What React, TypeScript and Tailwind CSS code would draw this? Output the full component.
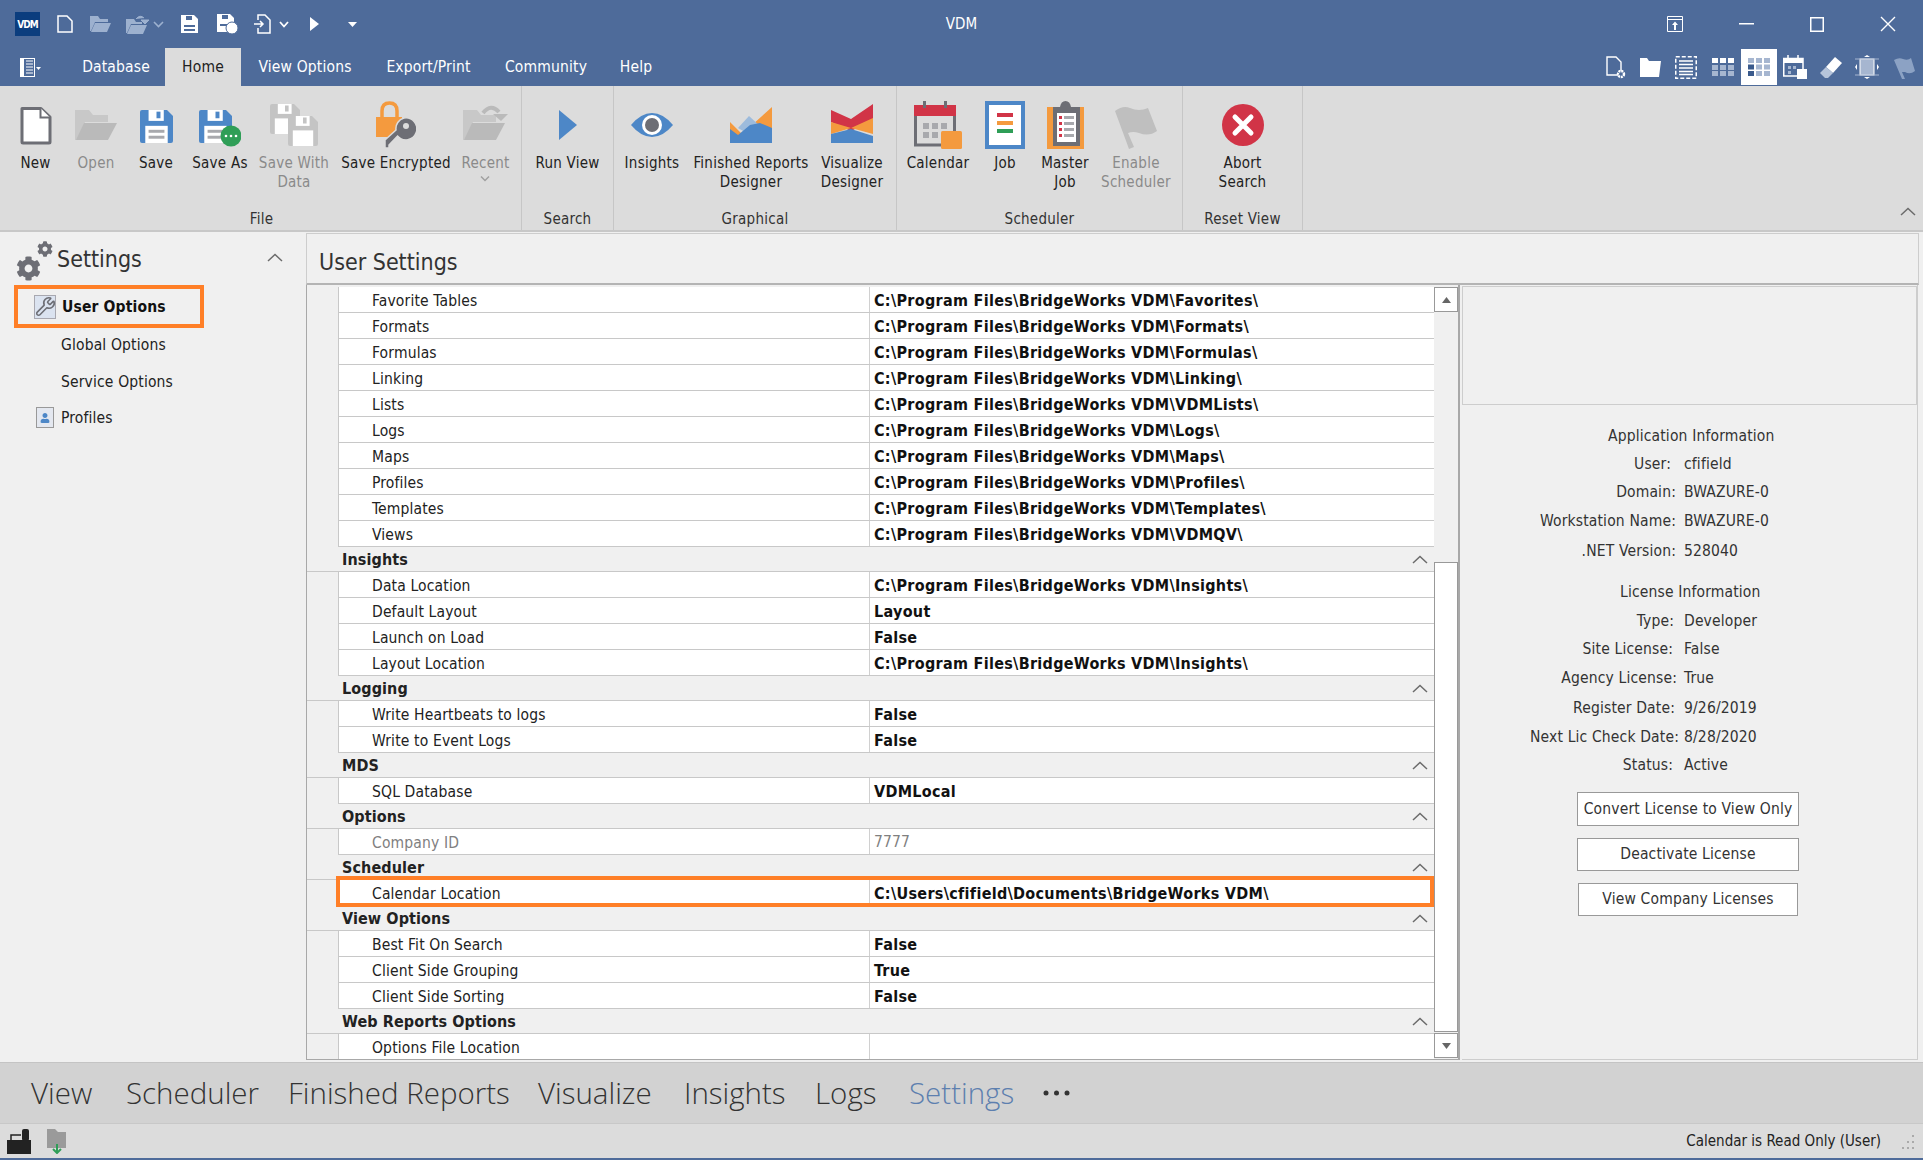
import { FaCog, FaUser } from "react-icons/fa"
import { Wrench } from "lucide-react"

const gridGroups = [
  {
    name: "",
    rows: [
      ["Favorite Tables", "C:\\Program Files\\BridgeWorks VDM\\Favorites\\"],
      ["Formats", "C:\\Program Files\\BridgeWorks VDM\\Formats\\"],
      ["Formulas", "C:\\Program Files\\BridgeWorks VDM\\Formulas\\"],
      ["Linking", "C:\\Program Files\\BridgeWorks VDM\\Linking\\"],
      ["Lists", "C:\\Program Files\\BridgeWorks VDM\\VDMLists\\"],
      ["Logs", "C:\\Program Files\\BridgeWorks VDM\\Logs\\"],
      ["Maps", "C:\\Program Files\\BridgeWorks VDM\\Maps\\"],
      ["Profiles", "C:\\Program Files\\BridgeWorks VDM\\Profiles\\"],
      ["Templates", "C:\\Program Files\\BridgeWorks VDM\\Templates\\"],
      ["Views", "C:\\Program Files\\BridgeWorks VDM\\VDMQV\\"],
    ],
  },
  {
    name: "Insights",
    rows: [
      ["Data Location", "C:\\Program Files\\BridgeWorks VDM\\Insights\\"],
      ["Default Layout", "Layout"],
      ["Launch on Load", "False"],
      ["Layout Location", "C:\\Program Files\\BridgeWorks VDM\\Insights\\"],
    ],
  },
  {
    name: "Logging",
    rows: [
      ["Write Heartbeats to logs", "False"],
      ["Write to Event Logs", "False"],
    ],
  },
  { name: "MDS", rows: [["SQL Database", "VDMLocal"]] },
  { name: "Options", rows: [["Company ID", "7777"]] },
  { name: "Scheduler", rows: [["Calendar Location", "C:\\Users\\cfifield\\Documents\\BridgeWorks VDM\\"]] },
  {
    name: "View Options",
    rows: [
      ["Best Fit On Search", "False"],
      ["Client Side Grouping", "True"],
      ["Client Side Sorting", "False"],
    ],
  },
  { name: "Web Reports Options", rows: [["Options File Location", ""]] },
]

function ChevUp({ className = "" }: { className?: string }) {
  return (
    <svg width="16" height="9" viewBox="0 0 16 9" className={className}>
      <path d="M1 8 L8 1.5 L15 8" fill="none" stroke="#6b6b6b" strokeWidth="1.5" />
    </svg>
  )
}

function Small({ w, h, children, className = "" }: { w: number; h: number; children: React.ReactNode; className?: string }) {
  return (
    <svg width={w} height={h} viewBox={`0 0 ${w} ${h}`} className={className}>
      {children}
    </svg>
  )
}

function FolderOpen({ back, front }: { back: string; front: string }) {
  return (
    <>
      <path d="M0 0 H14 L18 5 H33 V12 H10 L2 30 H0 Z" fill={back} />
      <path d="M9 13 H42 L33 30 H1 Z" fill={front} />
    </>
  )
}

function Floppy({ x, y, w, h, color, line }: { x: number; y: number; w: number; h: number; color: string; line?: string }) {
  return (
    <g transform={`translate(${x} ${y})`}>
      <path d={`M2 0 H${w - 6} L${w} 6 V${h - 2} Q${w} ${h} ${w - 2} ${h} H2 Q0 ${h} 0 ${h - 2} V2 Q0 0 2 0 Z`} fill={color} />
      <rect x={w * 0.26} y="0" width={w * 0.46} height={h * 0.33} fill="#fff" />
      <rect x={w * 0.5} y={h * 0.05} width={w * 0.12} height={h * 0.2} fill={color} />
      <rect x={w * 0.16} y={h * 0.48} width={w * 0.68} height={h * 0.52} fill="#fff" />
      {line && (
        <>
          <rect x={w * 0.26} y={h * 0.6} width={w * 0.48} height={h * 0.09} fill={line} />
          <rect x={w * 0.26} y={h * 0.78} width={w * 0.48} height={h * 0.09} fill={line} />
        </>
      )}
    </g>
  )
}

const ribbonIcons: Record<string, React.ReactNode> = {
  New: (
    <svg width="32" height="48" viewBox="0 0 32 48">
      <path d="M2 7.5 H21 L30 16 V41 Q30 42 29 42 H3 Q2 42 2 41 Z" fill="#fff" stroke="#6d6e75" strokeWidth="3" strokeLinejoin="round" />
      <path d="M20.5 7 V16.5 H30" fill="#fff" stroke="#6d6e75" strokeWidth="2" />
    </svg>
  ),
  Open: (
    <svg width="42" height="48" viewBox="0 0 42 48">
      <g transform="translate(0 9)">
        <FolderOpen back="#c8c8c8" front="#bababa" />
      </g>
    </svg>
  ),
  Save: (
    <svg width="33" height="48" viewBox="0 0 33 48">
      <Floppy x={0} y={9} w={33} h={33} color="#4d87c7" line="#a8a9ad" />
    </svg>
  ),
  "Save As": (
    <svg width="42" height="48" viewBox="0 0 42 48">
      <Floppy x={0} y={9} w={33} h={33} color="#4d87c7" line="#a8a9ad" />
      <circle cx="32" cy="35" r="10.5" fill="#2f9e57" />
      <circle cx="27" cy="35" r="1.3" fill="#fff" />
      <circle cx="32" cy="35" r="1.3" fill="#fff" />
      <circle cx="37" cy="35" r="1.3" fill="#fff" />
    </svg>
  ),
  "Save With Data": (
    <svg width="48" height="48" viewBox="0 0 48 48">
      <Floppy x={0} y={3} w={30} h={30} color="#c4c4c4" />
      <Floppy x={18} y={15} w={30} h={30} color="#c4c4c4" />
    </svg>
  ),
  "Save Encrypted": (
    <svg width="40" height="48" viewBox="0 0 40 48">
      <path d="M6 22 V10 Q6 2 13.5 2 Q21 2 21 10 V22" fill="none" stroke="#f49a3e" strokeWidth="3.5" />
      <rect x="0" y="16" width="26" height="20" fill="#f49a3e" />
      <path d="M28 17 A11 11 0 1 1 21.5 35 L13 44 V47 H9 V39 L20 29 A11 11 0 0 1 28 17 Z" fill="#6d6e75" stroke="#dcdcdc" strokeWidth="1.5" />
      <circle cx="30" cy="25" r="3" fill="#dcdcdc" />
    </svg>
  ),
  Recent: (
    <svg width="46" height="48" viewBox="0 0 46 48">
      <g transform="translate(0 9)">
        <FolderOpen back="#c8c8c8" front="#bababa" />
      </g>
      <path d="M20 12 Q28 2 36 11" fill="none" stroke="#bababa" strokeWidth="4" />
      <path d="M30 13 L45 13 L38 20 Z" fill="#bababa" />
    </svg>
  ),
  "Run View": (
    <svg width="18" height="48" viewBox="0 0 18 48">
      <path d="M0 9 L18 24 L0 39 Z" fill="#4d87c7" />
    </svg>
  ),
  Insights: (
    <svg width="42" height="48" viewBox="0 0 42 48">
      <path d="M0 24 Q10 12 21 12 Q32 12 42 24 Q32 36 21 36 Q10 36 0 24 Z" fill="#4d87c7" />
      <circle cx="21" cy="24" r="10" fill="#fff" />
      <circle cx="21" cy="24" r="7" fill="#6d6e75" />
    </svg>
  ),
  "Finished Reports Designer": (
    <svg width="42" height="48" viewBox="0 0 42 48">
      <path d="M0 21 L12 33 L42 6 V42 H0 Z" fill="#f49a3e" />
      <path d="M8 27 L19 15 L30 25 L20 34 Z" fill="#9dbbdc" />
      <path d="M0 28 L8 34 L20 24 L30 22 L42 27 V42 H0 Z" fill="#4d87c7" />
    </svg>
  ),
  "Visualize Designer": (
    <svg width="42" height="48" viewBox="0 0 42 48">
      <path d="M0 9 L20 18 L42 3 V19 L20 30 L0 21 Z" fill="#d13447" />
      <path d="M0 21 L20 27 L42 17 V33 L20 27 L0 33 Z" fill="#f49a3e" />
      <path d="M0 33 L20 28 L42 35 V42 H0 Z" fill="#4d87c7" />
    </svg>
  ),
  Calendar: (
    <svg width="48" height="48" viewBox="0 0 48 48">
      <rect x="1.5" y="7" width="39" height="37" fill="#dcdcdc" stroke="#6d6e75" strokeWidth="3" />
      <rect x="0" y="4" width="42" height="11" fill="#d13447" />
      <rect x="9" y="0" width="3" height="7" fill="#6d6e75" />
      <rect x="30" y="0" width="3" height="7" fill="#6d6e75" />
      <path d="M9 22 h6 v6 h-6z M18 22 h6 v6 h-6z M27 22 h6 v6 h-6z M9 31 h6 v6 h-6z M18 31 h6 v6 h-6z" fill="#a8a9ad" />
      <rect x="27" y="30" width="21" height="18" rx="1.5" fill="#f49a3e" />
    </svg>
  ),
  Job: (
    <svg width="40" height="48" viewBox="0 0 40 48">
      <rect x="2" y="2" width="36" height="44" fill="#fff" stroke="#4d87c7" strokeWidth="4" />
      <rect x="12" y="12" width="16" height="4" fill="#d13447" />
      <rect x="12" y="20" width="16" height="4" fill="#f49a3e" />
      <rect x="12" y="28" width="16" height="4" fill="#2f9e57" />
    </svg>
  ),
  "Master Job": (
    <svg width="37" height="48" viewBox="0 0 37 48">
      <rect x="0" y="6" width="37" height="42" fill="#f49a3e" />
      <path d="M6 6 H13 Q14 0 18.5 0 Q23 0 24 6 H33 V45 H6 Z" fill="#6d6e75" />
      <rect x="10" y="12" width="19" height="29" fill="#fff" />
      <path d="M12 15 h3 v3 h-3z M12 21 h3 v3 h-3z M12 27 h3 v3 h-3z M12 33 h3 v3 h-3z" fill="#d13447" />
      <path d="M17 15 h10 v3 h-10z M17 21 h10 v3 h-10z M17 27 h10 v3 h-10z M17 33 h10 v3 h-10z" fill="#a8a9ad" />
    </svg>
  ),
  "Enable Scheduler": (
    <svg width="42" height="48" viewBox="0 0 42 48">
      <path d="M0 10 Q8 4 15 7 Q24 11 33 7 L42 30 Q34 36 24 32 Q18 30 13 32 L19 46 L14 48 Z" fill="#bfbfbf" />
    </svg>
  ),
  "Abort Search": (
    <svg width="42" height="48" viewBox="0 0 42 48">
      <ellipse cx="21" cy="24" rx="21" ry="21" fill="#d13447" />
      <path d="M13 16 L29 32 M29 16 L13 32" stroke="#fff" strokeWidth="5" strokeLinecap="round" />
    </svg>
  ),
}

function RibbonButton({ label, width, disabled = false, caret = false, lines }: { label: string; width: string; disabled?: boolean; caret?: boolean; lines?: string[] }) {
  const parts = lines ?? [label]
  return (
    <div className={`${width} shrink-0 flex flex-col items-center ${disabled ? "text-[#8a8a8a]" : "text-[#222]"}`}>
      <div className="h-[48px] flex items-center justify-center">{ribbonIcons[label]}</div>
      <div className="mt-[5px] text-center leading-[19px] whitespace-nowrap">
        {parts.map((p) => (
          <div key={p}>{p}</div>
        ))}
        {caret && (
          <svg width="12" height="8" viewBox="0 0 12 8" className="mx-auto mt-[2px]">
            <path d="M2 1.5 L6 5.5 L10 1.5" fill="none" stroke="#a0a0a0" strokeWidth="1.5" />
          </svg>
        )}
      </div>
    </div>
  )
}

function RibbonGroup({ title, width, children }: { title: string; width: string; children: React.ReactNode }) {
  return (
    <div className={`${width} shrink-0 border-r border-[#c6c6c6] flex flex-col`}>
      <div className="flex flex-1 pt-[15px]">{children}</div>
      <div className="h-[24px] text-center leading-[26px] text-[#333]">{title}</div>
    </div>
  )
}

const infoRows = [
  { l: "User:", v: "cfifield", c: "mt-[8px] pr-[13px]" },
  { l: "Domain:", v: "BWAZURE-0", c: "mt-[8px] pr-[8px]" },
  { l: "Workstation Name:", v: "BWAZURE-0", c: "mt-[9px] pr-[8px]" },
  { l: ".NET Version:", v: "528040", c: "mt-[10px] pr-[8px]" },
]

const licRows = [
  { l: "Type:", v: "Developer", c: "mt-[9px] pr-[10px]" },
  { l: "Site License:", v: "False", c: "mt-[8px] pr-[11px]" },
  { l: "Agency License:", v: "True", c: "mt-[9px] pr-[7px]" },
  { l: "Register Date:", v: "9/26/2019", c: "mt-[10px] pr-[9px]" },
  { l: "Next Lic Check Date:", v: "8/28/2020", c: "mt-[9px] pr-[5px]" },
  { l: "Status:", v: "Active", c: "mt-[8px] pr-[11px]" },
]

function InfoRow({ l, v, c }: { l: string; v: string; c: string }) {
  const [mt, pr] = c.split(" ")
  return (
    <div className={`flex h-[20px] leading-[22px] ${mt}`}>
      <div className={`w-[222px] text-right whitespace-nowrap ${pr}`}>{l}</div>
      <div className="whitespace-nowrap">{v}</div>
    </div>
  )
}

export default function App() {
  return (
    <div className="w-[1923px] h-[1160px] overflow-hidden flex flex-col bg-[#f0f0f0] text-[15.5px] tracking-[0.15px] text-[#222] font-['DejaVu_Sans_Condensed','DejaVu_Sans',sans-serif]">
      {/* title bar */}
      <div className="bg-[#4e6b9a] text-white shrink-0">
        <div className="h-[48px] grid grid-cols-[1fr_auto_1fr] items-center">
          <div className="flex items-center pl-[15px]">
            <div className="w-[25px] h-[24px] bg-[#0b3d7e] text-[10px] font-bold tracking-[-1px] flex items-center justify-center">VDM</div>
            <Small w={16} h={18} className="ml-[17px]">
              <path d="M1 1 H10 L15 6 V17 H1 Z" fill="none" stroke="#fff" strokeWidth="1.5" />
            </Small>
            <Small w={21} h={18} className="ml-[17px]">
              <path d="M0 1 H8 L10 4 H18 V7 H5 L1 16 H0 Z M5 8 H21 L17 17 H1 Z" fill="#9db1cf" />
            </Small>
            <Small w={23} h={20} className="ml-[15px]">
              <path d="M0 5 H8 L10 8 H16 V10 H5 L1 19 H0 Z M5 11 H21 L17 20 H1 Z" fill="#9db1cf" />
              <path d="M10 5 Q14 0 18 4 M15 6 H23 L19 10 Z" fill="#9db1cf" stroke="#9db1cf" />
            </Small>
            <Small w={11} h={7} className="ml-[4px]">
              <path d="M1 1 L5.5 5.5 L10 1" fill="none" stroke="#9db1cf" strokeWidth="1.6" />
            </Small>
            <Small w={17} h={18} className="ml-[17px]">
              <path d="M0 0 H13 L17 4 V18 H0 Z" fill="#fff" />
              <path d="M5 1 H11 V5 H5 Z M3 10 H14 V12 H3 Z M3 14 H14 V16 H3 Z" fill="#4e6b9a" />
            </Small>
            <Small w={21} h={20} className="ml-[19px]">
              <path d="M0 0 H13 L17 4 V18 H0 Z" fill="#fff" />
              <path d="M5 1 H11 V5 H5 Z M3 10 H14 V12 H3 Z" fill="#4e6b9a" />
              <circle cx="15" cy="14" r="6" fill="#fff" stroke="#4e6b9a" />
            </Small>
            <Small w={17} h={20} className="ml-[16px]">
              <path d="M4 6 V1 H11 L16 6 V19 H4 V14" fill="none" stroke="#fff" strokeWidth="1.5" />
              <path d="M0 10 H9 M6 7 L9 10 L6 13" fill="none" stroke="#fff" strokeWidth="1.5" />
            </Small>
            <Small w={10} h={7} className="ml-[8px]">
              <path d="M1 1 L5 5.5 L9 1" fill="none" stroke="#fff" strokeWidth="1.8" />
            </Small>
            <Small w={9} h={14} className="ml-[21px]">
              <path d="M0 0 L9 7 L0 14 Z" fill="#fff" />
            </Small>
            <Small w={9} h={5} className="ml-[29px]">
              <path d="M0 0 H9 L4.5 5 Z" fill="#fff" />
            </Small>
          </div>
          <div className="text-[15px] tracking-normal">VDM</div>
          <div className="flex items-center justify-end pr-[27px]">
            <Small w={16} h={16}>
              <path d="M.5 .5 H15.5 V15.5 H.5 Z M.5 3.5 H15.5" fill="none" stroke="#fff" />
              <path d="M8 5.5 L11 9 H9 V14 H7 V9 H5 Z" fill="#fff" />
            </Small>
            <Small w={15} h={2} className="ml-[56px]">
              <rect width="15" height="1.5" fill="#fff" />
            </Small>
            <Small w={14} h={15} className="ml-[56px]">
              <rect x=".75" y=".75" width="12.5" height="13.5" fill="none" stroke="#fff" strokeWidth="1.5" />
            </Small>
            <Small w={16} h={16} className="ml-[56px]">
              <path d="M1 1 L15 15 M15 1 L1 15" stroke="#fff" strokeWidth="1.4" />
            </Small>
          </div>
        </div>
        <div className="h-[38px] flex items-end">
          <div className="w-[67px] h-full shrink-0 flex items-center pl-[20px]">
            <Small w={15} h={19}>
              <rect x=".5" y=".5" width="14" height="18" fill="#4e6b9a" stroke="#fff" />
              <rect x="0" y="0" width="4" height="19" fill="#fff" />
              <path d="M6 3 H13 M6 6 H13 M6 9 H13 M6 12 H13 M6 15 H13" stroke="#fff" />
            </Small>
            <Small w={5} h={3} className="ml-[1px] mt-[3px]">
              <path d="M0 0 H5 L2.5 3 Z" fill="#fff" />
            </Small>
          </div>
          {[
            ["Database", "w-[98px]"],
            ["Home", "w-[76px]"],
            ["View Options", "w-[128px]"],
            ["Export/Print", "w-[119px]"],
            ["Community", "w-[116px]"],
            ["Help", "w-[64px]"],
          ].map(([t, w]) => (
            <div key={t} className={`${w} h-full flex items-center justify-center pt-[1px] ${t === "Home" ? "bg-[#dcdcdc] text-[#222]" : "text-white"}`}>
              {t}
            </div>
          ))}
          <div className="flex-1 h-full flex items-center justify-end pr-[8px]">
            <Small w={20} h={23}>
              <path d="M1 1 H10 L15 6 V19 H1 Z" fill="none" stroke="#fff" strokeWidth="1.4" />
              <circle cx="15" cy="18" r="3" fill="#4e6b9a" stroke="#fff" strokeWidth="2.4" strokeDasharray="2 .8" />
            </Small>
            <Small w={21} h={21} className="ml-[14px]">
              <path d="M0 1 H7 L9 4 H21 L19 20 H0 Z" fill="#fff" />
            </Small>
            <Small w={22} h={23} className="ml-[14px]">
              <rect x=".75" y=".75" width="20.5" height="21.5" fill="none" stroke="#fff" strokeWidth="1.5" strokeDasharray="4 2" />
              <path d="M4 5 H18 M4 8.5 H18 M4 12 H18 M4 15.5 H18 M4 18.5 H18" stroke="#fff" strokeWidth="1.5" />
            </Small>
            <Small w={22} h={18} className="ml-[15px]">
              <path d="M0 0 h6 v5 h-6z M8 0 h6 v5 h-6z M16 0 h6 v5 h-6z" fill="#fff" />
              <path d="M0 7 h6 v5 h-6z M8 7 h6 v5 h-6z M16 7 h6 v5 h-6z M0 13 h6 v5 h-6z M8 13 h6 v5 h-6z M16 13 h6 v5 h-6z" fill="#a6b6d0" />
            </Small>
            <div className="ml-[7px] w-[36px] h-[36px] bg-white flex items-center justify-center">
              <Small w={22} h={18}>
                <path d="M0 0 h6 v5 h-6z M8 0 h6 v5 h-6z M16 0 h6 v5 h-6z M8 6.5 h6 v5 h-6z M16 6.5 h6 v5 h-6z M8 13 h6 v5 h-6z M16 13 h6 v5 h-6z" fill="#a6b6d0" />
                <path d="M0 6.5 h6 v5 h-6z M0 13 h6 v5 h-6z" fill="#3a5a8c" />
              </Small>
            </div>
            <Small w={24} h={24} className="ml-[6px]">
              <path d="M.75 3.5 H20 V21 H.75 Z" fill="none" stroke="#fff" strokeWidth="1.5" />
              <rect x="0" y="3" width="20" height="5" fill="#fff" />
              <path d="M5 0 V4 M15 0 V4" stroke="#fff" strokeWidth="1.5" />
              <path d="M5 11 h3 v3 h-3z M10 11 h3 v3 h-3z M5 16 h3 v3 h-3z" fill="#a6b6d0" />
              <rect x="14" y="14" width="10" height="10" fill="#fff" />
            </Small>
            <Small w={22} h={21} className="ml-[13px]">
              <path d="M15 0 L22 6 L13 16 L6 10 Z" fill="#fff" />
              <path d="M6 10 L13 16 L8 21 H5 L0 16 Z" fill="#b6c4da" />
            </Small>
            <Small w={24} h={24} className="ml-[13px]">
              <rect x="5" y="4" width="14" height="16" fill="#a6b6d0" stroke="#fff" />
              <path d="M0 4 H24 M0 20 H24" stroke="#a6b6d0" />
              <path d="M12 0 L9 2 H15 Z M12 24 L9 22 H15 Z M0 12 L2 9 V15 Z M24 12 L22 9 V15 Z" fill="#fff" />
            </Small>
            <Small w={21} h={23} className="ml-[15px]">
              <path d="M0 4 Q5 1 9 3 Q14 5 17 2 L21 15 Q16 19 11 16 L8 16 L11 23 L8 23 Z" fill="#8ca2c4" />
            </Small>
          </div>
        </div>
      </div>

      {/* ribbon */}
      <div className="h-[146px] shrink-0 bg-[#dcdcdc] border-b-2 border-[#c8c8c8] flex pl-[2px] relative text-[15px] tracking-[0.25px]">
        <RibbonGroup title="File" width="w-[520px]">
          <div className="w-[3px] shrink-0" />
          <RibbonButton label="New" width="w-[61px]" />
          <RibbonButton label="Open" width="w-[60px]" disabled />
          <RibbonButton label="Save" width="w-[60px]" />
          <RibbonButton label="Save As" width="w-[68px]" />
          <RibbonButton label="Save With Data" lines={["Save With", "Data"]} width="w-[80px]" disabled />
          <RibbonButton label="Save Encrypted" width="w-[124px]" />
          <RibbonButton label="Recent" width="w-[55px]" disabled caret />
        </RibbonGroup>
        <RibbonGroup title="Search" width="w-[92px]">
          <div className="flex-1 flex justify-center">
            <RibbonButton label="Run View" width="w-[90px]" />
          </div>
        </RibbonGroup>
        <RibbonGroup title="Graphical" width="w-[283px]">
          <RibbonButton label="Insights" width="w-[76px]" />
          <RibbonButton label="Finished Reports Designer" lines={["Finished Reports", "Designer"]} width="w-[122px]" />
          <RibbonButton label="Visualize Designer" lines={["Visualize", "Designer"]} width="w-[80px]" />
        </RibbonGroup>
        <RibbonGroup title="Scheduler" width="w-[286px]">
          <RibbonButton label="Calendar" width="w-[82px]" />
          <RibbonButton label="Job" width="w-[52px]" />
          <RibbonButton label="Master Job" lines={["Master", "Job"]} width="w-[68px]" />
          <RibbonButton label="Enable Scheduler" lines={["Enable", "Scheduler"]} width="w-[74px]" disabled />
        </RibbonGroup>
        <RibbonGroup title="Reset View" width="w-[120px]">
          <div className="flex-1 flex justify-center">
            <RibbonButton label="Abort Search" lines={["Abort", "Search"]} width="w-[90px]" />
          </div>
        </RibbonGroup>
        <ChevUp className="absolute right-[7px] top-[121px]" />
      </div>

      {/* main */}
      <div className="flex-1 flex min-h-0 pl-[1px] pt-[1px] bg-[#f0f0f0]">
        <div className="w-[305px] shrink-0">
          <div className="h-[52px] flex items-center relative pl-[56px] text-[23px] tracking-normal text-[#333]">
            <FaCog className="absolute left-[15px] top-[23px] text-[25px] text-[#6d6e75]" />
            <FaCog className="absolute left-[36px] top-[8px] text-[16px] text-[#6d6e75]" />
            <span>Settings</span>
            <ChevUp className="absolute left-[266px] top-[20px]" />
          </div>
          <div className="ml-[13px] w-[190px] h-[43px] border-4 border-[#ff7f27] flex items-center pl-[16px] pt-[3px] font-bold text-[#111] relative">
            <div className="w-[22px] h-[24px] bg-[#dbe3f0] border border-[#a8a8b0] mr-[6px] mb-[3px] flex items-center justify-center shrink-0">
              <Wrench size={21} strokeWidth={1.8} className="text-[#6d6e75] shrink-0" />
            </div>
            User Options
          </div>
          <div className="pl-[60px] h-[37px] leading-[41px] mt-[-3px]">Global Options</div>
          <div className="pl-[60px] h-[37px] leading-[41px]">Service Options</div>
          <div className="h-[37px] flex items-center pl-[35px]">
            <div className="w-[18px] h-[21px] bg-[#e4e8f0] border border-[#999] mr-[7px] flex items-center justify-center">
              <FaUser className="text-[10px] text-[#4d87c7]" />
            </div>
            <span className="pt-[3px]">Profiles</span>
          </div>
        </div>

        <div className="w-[1613px] shrink-0 flex flex-col">
          <div className="h-[52px] shrink-0 border border-[#cdcdcd] border-b-2 border-b-[#b4b4b4] flex items-center pl-[12px] pt-[8px] text-[23px] tracking-normal text-[#333]">
            User Settings
          </div>
          <div className="h-[775px] shrink-0 flex">
            {/* property grid */}
            <div className="w-[1154px] shrink-0 flex border-l border-b border-r-2 border-[#a8a8a8] overflow-hidden">
              <div className="w-[1127px] shrink-0 pt-[2px]">
                {gridGroups.map((g) => (
                  <div key={g.name}>
                    {g.name && (
                      <div className="h-[25px] pl-[35px] pr-[6px] pt-[1px] flex items-center justify-between font-bold text-[16px] tracking-[0.1px] text-[#222] border-b border-[#c8c8c8]">
                        {g.name}
                        <ChevUp />
                      </div>
                    )}
                    {g.rows.map(([k, v]) => {
                      const muted = k === "Company ID"
                      const marked = k === "Calendar Location"
                      return (
                        <div key={k} className="h-[26px] ml-[31px] bg-white flex border-b border-l border-[#c8c8c8] relative">
                          <div className={`w-[531px] shrink-0 pl-[33px] leading-[28px] border-r border-[#d0d0d0] ${muted ? "text-[#808080]" : ""}`}>{k}</div>
                          <div className={`pl-[4px] leading-[27px] whitespace-nowrap ${muted ? "text-[#808080]" : "font-bold text-[16px] tracking-[0.3px] text-[#111]"}`}>{v}</div>
                          {marked && <div className="absolute left-[-3px] right-0 top-[-4px] bottom-[-2px] border-[4px] border-[#ff7f27]" />}
                        </div>
                      )
                    })}
                  </div>
                ))}
              </div>
              <div className="w-[24px] shrink-0 flex flex-col pt-[2px] bg-[#f0f0f0]">
                <div className="h-[25px] bg-white border border-[#999] flex items-center justify-center">
                  <Small w={9} h={6}>
                    <path d="M4.5 0 L9 6 H0 Z" fill="#666" />
                  </Small>
                </div>
                <div className="h-[250px]" />
                <div className="flex-1 bg-white border border-[#999]" />
                <div className="h-[25px] mt-[1px] mb-[1px] bg-white border border-[#999] flex items-center justify-center">
                  <Small w={9} h={6}>
                    <path d="M0 0 H9 L4.5 6 Z" fill="#666" />
                  </Small>
                </div>
              </div>
            </div>

            {/* info panel */}
            <div className="ml-[2px] w-[456px] shrink-0 border-b border-r border-[#cdcdcd] text-[#333]">
              <div className="h-[119px] border border-[#cdcdcd] mt-[1px]" />
              <div className="mt-[20px] ml-[146px] h-[20px] leading-[22px] whitespace-nowrap">Application Information</div>
              {infoRows.map((r) => (
                <InfoRow key={r.l} {...r} />
              ))}
              <div className="mt-[21px] ml-[158px] h-[20px] leading-[22px] whitespace-nowrap">License Information</div>
              {licRows.map((r) => (
                <InfoRow key={r.l} {...r} />
              ))}
              <div className="mt-[18px] ml-[115px] w-[222px] h-[34px] bg-white border border-[#999] flex items-center justify-center pt-[1px]">Convert License to View Only</div>
              <div className="mt-[12px] ml-[115px] w-[222px] h-[33px] bg-white border border-[#999] flex items-center justify-center pt-[1px]">Deactivate License</div>
              <div className="mt-[12px] ml-[116px] w-[220px] h-[33px] bg-white border border-[#999] flex items-center justify-center pt-[1px]">View Company Licenses</div>
            </div>
          </div>
        </div>
      </div>

      {/* bottom nav */}
      <div className="h-[61px] shrink-0 bg-[#d2d2d2] border-t border-[#c4c4c4] flex items-center pl-[31px] text-[29.5px] tracking-normal font-light text-[#333] font-['Open_Sans',sans-serif]">
        <span className="w-[95px]">View</span>
        <span className="w-[162px]">Scheduler</span>
        <span className="w-[250px]">Finished Reports</span>
        <span className="w-[146px]">Visualize</span>
        <span className="w-[131px]">Insights</span>
        <span className="w-[94px]">Logs</span>
        <span className="w-[134px] text-[#5d7faf]">Settings</span>
        <Small w={27} h={6}>
          <circle cx="3" cy="3" r="2.5" fill="#333" />
          <circle cx="13.5" cy="3" r="2.5" fill="#333" />
          <circle cx="24" cy="3" r="2.5" fill="#333" />
        </Small>
      </div>

      {/* status bar */}
      <div className="h-[37px] shrink-0 bg-[#dcdcdc] border-t border-[#c8c8c8] border-b-2 border-b-[#4e6b9a] flex items-center pl-[7px] pr-[8px] text-[15px] tracking-normal">
        <Small w={26} h={26}>
          <rect x="0" y="12" width="24" height="14" fill="#222" />
          <path d="M4 12 V7 H14" fill="none" stroke="#222" strokeWidth="1.5" />
          <rect x="15" y="1" width="7" height="12" rx="2" fill="#222" />
        </Small>
        <Small w={22} h={26} className="ml-[13px]">
          <path d="M1 1 H9 L12 4 H20 V20 H1 Z" fill="#9a9a9a" />
          <path d="M11 16 V25 M7 21 L11 25 L15 21" fill="none" stroke="#2f9e57" strokeWidth="2" />
        </Small>
        <div className="ml-auto">Calendar is Read Only (User)</div>
        <Small w={16} h={18} className="ml-[18px]">
          <path d="M13 3 h2 v2 h-2z M13 9 h2 v2 h-2z M8 9 h2 v2 h-2z M13 15 h2 v2 h-2z M8 15 h2 v2 h-2z M3 15 h2 v2 h-2z" fill="#aaa" />
        </Small>
      </div>
    </div>
  )
}
